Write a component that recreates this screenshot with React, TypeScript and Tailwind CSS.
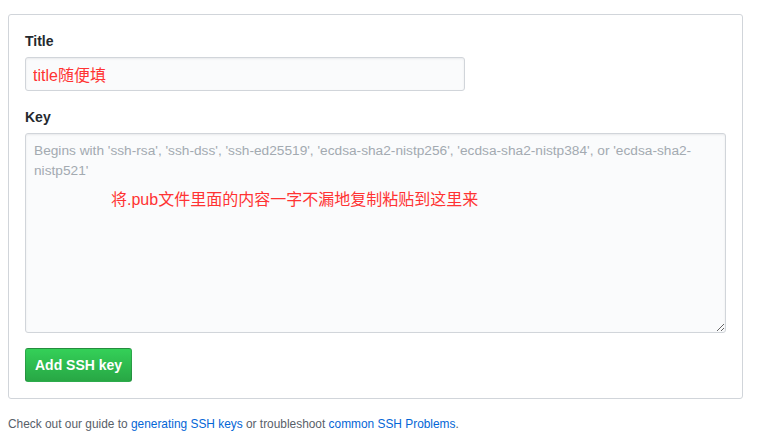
import { useState } from "react";

const PLACEHOLDER =
  "Begins with 'ssh-rsa', 'ssh-dss', 'ssh-ed25519', 'ecdsa-sha2-nistp256', 'ecdsa-sha2-nistp384', or 'ecdsa-sha2-\nnistp521'";

function App() {
  const [title, setTitle] = useState("title随便填");
  const [key, setKey] = useState("");

  return (
    <div
      className="min-h-screen bg-white pt-[14px] pl-[8px]"
      style={{ fontFamily: '"Liberation Sans", "Noto Sans CJK SC", sans-serif' }}
    >
      <form
        className="w-[735px] rounded-[3px] border border-[#d1d5da] p-4"
        onSubmit={(e) => e.preventDefault()}
      >
        <label className="mb-[6px] block text-[14px] leading-5 font-semibold text-[#24292e]">Title</label>
        <input
          value={title}
          onChange={(e) => setTitle(e.target.value)}
          className="block h-[34px] w-[440px] rounded-[3px] border border-[#d1d5da] bg-[#fafbfc] px-[7px] text-[16px] text-[#ff3333] shadow-[inset_0_1px_2px_rgba(27,31,35,0.075)] outline-none"
        />

        <label className="mt-[16px] mb-[6px] block text-[14px] leading-5 font-semibold text-[#24292e]">Key</label>
        <div className="relative">
          <textarea
            value={key}
            onChange={(e) => setKey(e.target.value)}
            placeholder={PLACEHOLDER}
            className="block h-[200px] w-[701px] rounded-[3px] border border-[#d1d5da] bg-[#fafbfc] px-2 py-[7px] text-[13.7px] leading-5 text-[#24292e] shadow-[inset_0_1px_2px_rgba(27,31,35,0.075)] outline-none placeholder:text-[#a3aab1]"
          />
          <span className="pointer-events-none absolute top-[57px] left-[86px] text-[16px] leading-5 text-[#ff3333]">
            将.pub文件里面的内容一字不漏地复制粘贴到这里来
          </span>
        </div>

        <button
          type="submit"
          className="mt-[15px] h-[34px] rounded-[3px] border border-[rgba(27,31,35,0.2)] bg-gradient-to-b from-[#34d058] to-[#28a745] px-[9px] text-[14px] font-semibold text-white"
        >
          Add SSH key
        </button>
      </form>

      <p className="mt-[17px] text-[11.9px] leading-4 text-[#586069]">
        Check out our guide to <a href="#" className="text-[#0366d6]">generating SSH keys</a> or troubleshoot{" "}
        <a href="#" className="text-[#0366d6]">common SSH Problems</a>.
      </p>
    </div>
  );
}

export default App;
